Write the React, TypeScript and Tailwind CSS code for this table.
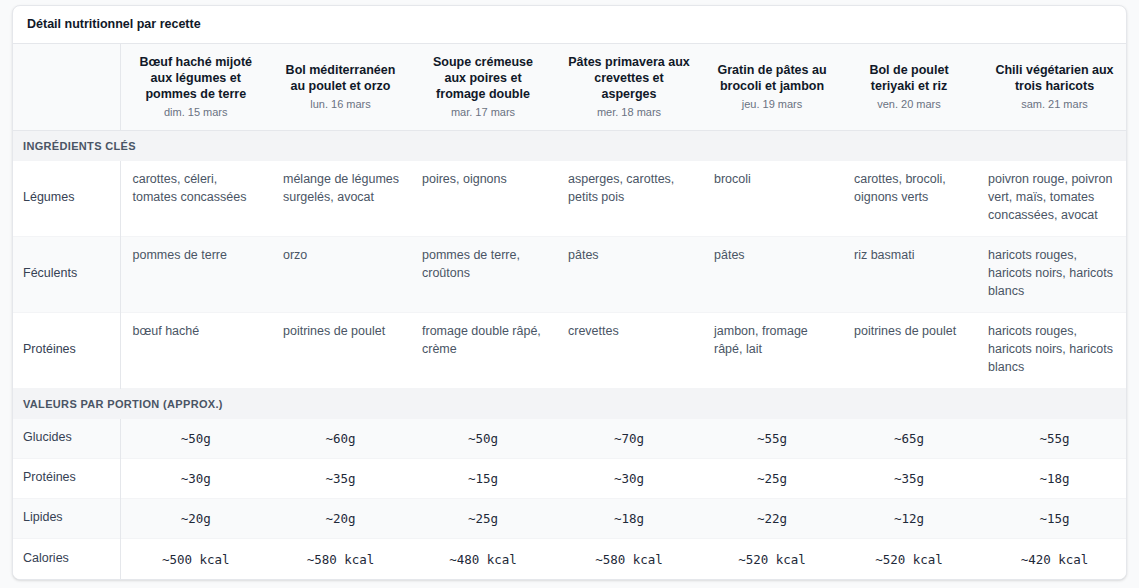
import React from 'react';

type Recipe = {
  name: string;
  date: string;
  legumes: string;
  feculents: string;
  proteines: string;
  glucides: string;
  prot: string;
  lipides: string;
  calories: string;
};

const recipes: Recipe[] = [
  {
    name: 'Bœuf haché mijoté aux légumes et pommes de terre',
    date: 'dim. 15 mars',
    legumes: 'carottes, céleri, tomates concassées',
    feculents: 'pommes de terre',
    proteines: 'bœuf haché',
    glucides: '~50g',
    prot: '~30g',
    lipides: '~20g',
    calories: '~500 kcal',
  },
  {
    name: 'Bol méditerranéen au poulet et orzo',
    date: 'lun. 16 mars',
    legumes: 'mélange de légumes surgelés, avocat',
    feculents: 'orzo',
    proteines: 'poitrines de poulet',
    glucides: '~60g',
    prot: '~35g',
    lipides: '~20g',
    calories: '~580 kcal',
  },
  {
    name: 'Soupe crémeuse aux poires et fromage double',
    date: 'mar. 17 mars',
    legumes: 'poires, oignons',
    feculents: 'pommes de terre, croûtons',
    proteines: 'fromage double râpé, crème',
    glucides: '~50g',
    prot: '~15g',
    lipides: '~25g',
    calories: '~480 kcal',
  },
  {
    name: 'Pâtes primavera aux crevettes et asperges',
    date: 'mer. 18 mars',
    legumes: 'asperges, carottes, petits pois',
    feculents: 'pâtes',
    proteines: 'crevettes',
    glucides: '~70g',
    prot: '~30g',
    lipides: '~18g',
    calories: '~580 kcal',
  },
  {
    name: 'Gratin de pâtes au brocoli et jambon',
    date: 'jeu. 19 mars',
    legumes: 'brocoli',
    feculents: 'pâtes',
    proteines: 'jambon, fromage râpé, lait',
    glucides: '~55g',
    prot: '~25g',
    lipides: '~22g',
    calories: '~520 kcal',
  },
  {
    name: 'Bol de poulet teriyaki et riz',
    date: 'ven. 20 mars',
    legumes: 'carottes, brocoli, oignons verts',
    feculents: 'riz basmati',
    proteines: 'poitrines de poulet',
    glucides: '~65g',
    prot: '~35g',
    lipides: '~12g',
    calories: '~520 kcal',
  },
  {
    name: 'Chili végétarien aux trois haricots',
    date: 'sam. 21 mars',
    legumes: 'poivron rouge, poivron vert, maïs, tomates concassées, avocat',
    feculents: 'haricots rouges, haricots noirs, haricots blancs',
    proteines: 'haricots rouges, haricots noirs, haricots blancs',
    glucides: '~55g',
    prot: '~18g',
    lipides: '~15g',
    calories: '~420 kcal',
  },
];

const ingredientRows: { label: string; key: keyof Recipe }[] = [
  { label: 'Légumes', key: 'legumes' },
  { label: 'Féculents', key: 'feculents' },
  { label: 'Protéines', key: 'proteines' },
];

const valueRows: { label: string; key: keyof Recipe }[] = [
  { label: 'Glucides', key: 'glucides' },
  { label: 'Protéines', key: 'prot' },
  { label: 'Lipides', key: 'lipides' },
  { label: 'Calories', key: 'calories' },
];

const SectionRow = ({ title }: { title: string }) => (
  <tr className="bg-gray-100">
    <td
      colSpan={8}
      className="pl-[10px] py-2 text-[11px] leading-[14px] font-bold uppercase tracking-[0.03em] text-gray-600"
    >
      {title}
    </td>
  </tr>
);

const App: React.FC = () => {
  return (
    <div
      className="min-h-screen bg-gray-50 px-3 pt-[5px] pb-2"
      style={{ fontFamily: '"Liberation Sans", Arial, sans-serif' }}
    >
      <div className="bg-white rounded-lg border border-gray-200 shadow-sm overflow-hidden">
        <div className="px-[14px] py-3 border-b border-gray-200">
          <h2 className="text-[12.5px] leading-[13px] font-bold text-gray-900">
            Détail nutritionnel par recette
          </h2>
        </div>

        <table className="w-full table-fixed border-collapse">
          <colgroup>
            <col className="w-[107px]" />
            <col className="w-[151px]" />
            <col className="w-[139px]" />
            <col className="w-[146px]" />
            <col className="w-[146px]" />
            <col className="w-[140px]" />
            <col className="w-[134px]" />
            <col className="w-[157px]" />
          </colgroup>
          <thead>
            <tr className="bg-gray-50 border-b border-gray-200">
              <th className="border-r border-gray-200"></th>
              {recipes.map((r) => (
                <th key={r.name} className="px-3 py-2.5 align-middle text-center">
                  <div className="text-[12.5px] leading-4 font-bold text-gray-900">{r.name}</div>
                  <div className="mt-0.5 text-[11px] leading-4 font-normal text-gray-500">
                    {r.date}
                  </div>
                </th>
              ))}
            </tr>
          </thead>
          <tbody>
            <SectionRow title="Ingrédients clés" />
            {ingredientRows.map((row, i) => (
              <tr
                key={row.label}
                className={`border-b border-gray-100 ${i % 2 === 1 ? 'bg-gray-50' : 'bg-white'}`}
              >
                <td className="pl-[10px] pr-2 pb-[3px] align-middle text-[12.5px] leading-[18px] text-gray-700 border-r border-gray-200">
                  {row.label}
                </td>
                {recipes.map((r) => (
                  <td
                    key={r.name}
                    className="pl-3 pr-2 last:pr-3 pt-[9px] pb-[12px] align-top text-[12.5px] leading-[18px] text-gray-600"
                  >
                    {r[row.key]}
                  </td>
                ))}
              </tr>
            ))}
            <SectionRow title="Valeurs par portion (approx.)" />
            {valueRows.map((row, i) => {
              const isLast = i === valueRows.length - 1;
              return (
                <tr
                  key={row.label}
                  className={`${isLast ? '' : 'border-b border-gray-100'} ${
                    i % 2 === 0 ? 'bg-gray-50' : 'bg-white'
                  }`}
                >
                  <td
                    className={`pl-[10px] pr-2 pb-[9px] align-top text-[12.5px] leading-[18px] text-gray-700 border-r border-gray-200 ${
                      isLast ? 'pt-[10px]' : 'pt-[9px]'
                    }`}
                  >
                    {row.label}
                  </td>
                  {recipes.map((r) => (
                    <td
                      key={r.name}
                      className={`px-3 pb-[10px] align-middle text-center font-['DejaVu_Sans_Mono',monospace] text-[12.5px] leading-[19px] text-gray-800 ${
                        isLast ? 'pt-[11px]' : 'pt-[10px]'
                      }`}
                    >
                      {r[row.key]}
                    </td>
                  ))}
                </tr>
              );
            })}
          </tbody>
        </table>
      </div>
    </div>
  );
};

export default App;
